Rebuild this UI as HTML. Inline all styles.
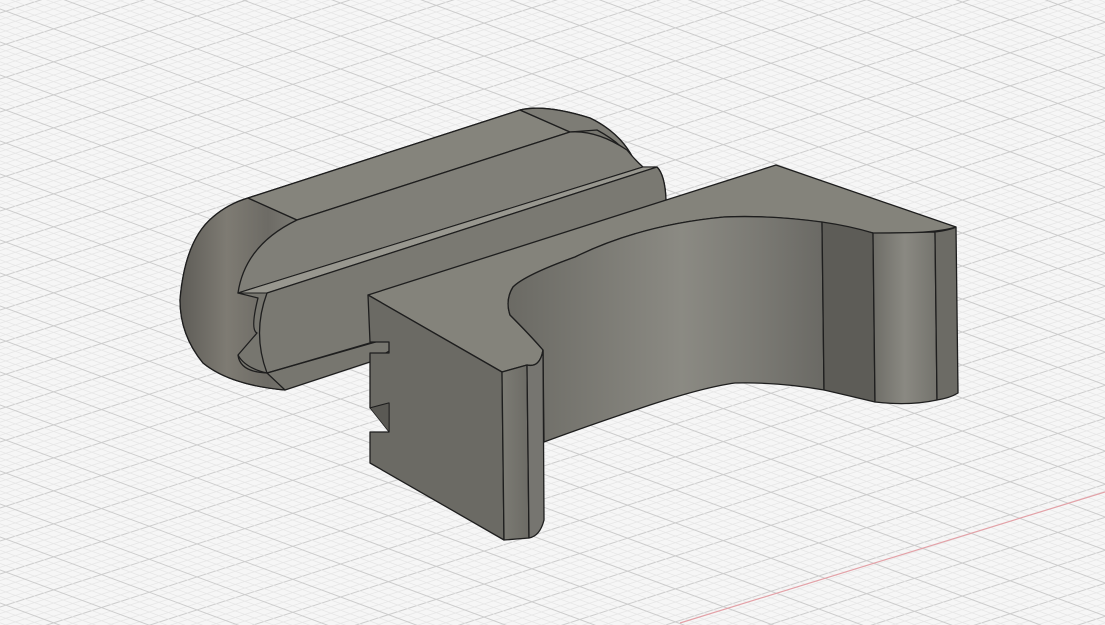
<!DOCTYPE html>
<html><head><meta charset="utf-8"><style>
html,body{margin:0;padding:0;background:#f6f6f6;width:1105px;height:625px;overflow:hidden}
svg{display:block}
</style></head><body>
<svg id="s" width="1105" height="625" viewBox="0 0 1105 625" xmlns="http://www.w3.org/2000/svg" style="overflow:hidden">
<defs>
<linearGradient id="cap" x1="0" x2="1" y1="0" y2="0">
<stop offset="0" stop-color="#5e5c57"/><stop offset="0.4" stop-color="#7e7b73"/><stop offset="0.75" stop-color="#6d6b65"/><stop offset="1" stop-color="#7b7a73"/></linearGradient>
<linearGradient id="inner" x1="0" x2="1" y1="0" y2="0">
<stop offset="0" stop-color="#6b6a64"/><stop offset="0.55" stop-color="#8b8a83"/><stop offset="0.8" stop-color="#7a7973"/><stop offset="1" stop-color="#6a6964"/></linearGradient>
<linearGradient id="rr" x1="0" x2="1" y1="0" y2="0">
<stop offset="0" stop-color="#6e6d67"/><stop offset="0.5" stop-color="#8a8982"/><stop offset="1" stop-color="#74736d"/></linearGradient>
<linearGradient id="strip" x1="0" x2="1" y1="0" y2="0">
<stop offset="0" stop-color="#7c7b74"/><stop offset="1" stop-color="#6c6b65"/></linearGradient>
</defs>
<g id="grid"></g>
<line x1="680" y1="623" x2="1105" y2="492" stroke="#e3a2a8" stroke-width="1.2"/>
<g stroke="#1e1e1e" stroke-width="1.3" stroke-linejoin="round">
<!-- back body silhouette -->
<path d="M248,198 L520,110 Q545,104 590,118 Q625,135 637,167 L657,167 Q665,175 666,200 L420,300 L400,345 L370,362 L285,390 Q230,385 203,363 Q180,335 180,300 Q185,240 213,217 Q228,204 248,198 Z" fill="#77766f"/>
<!-- left curved cap -->
<path d="M248,198 L297,220 Q250,245 240,292 L238,293 L258,298 Q250,330 257,333 L238,355 Q240,372 267,373 L285,390 Q230,385 203,363 Q180,335 180,300 Q185,240 213,217 Q228,204 248,198 Z" fill="url(#cap)"/>
<!-- top strip -->
<path d="M248,198 L520,110 L570,132 L297,220 Z" fill="#85847c"/>
<path d="M520,110 Q545,104 590,118 Q625,135 637,167 L635,165 Q625,145 597,130 L570,132 Z" fill="#7d7c75"/>
<!-- upper curved face -->
<path d="M297,220 L570,132 Q597,130 627,150 Q635,160 643,167 L238,293 Q245,245 297,220 Z" fill="#807f78"/>
<!-- groove -->
<path d="M238,293 L643,167 L657,167 L267,293 Z" fill="#98978f" stroke-width="1"/>
<!-- lower face -->
<path d="M267,293 L657,167 Q665,175 666,200 L420,300 L400,335 L267,373 Q252,333 267,293 Z" fill="#7a7972"/>
<path d="M267,373 L380,340" fill="none"/>
<path d="M238,355 Q245,368 267,373" fill="none"/>
<!-- hook top face -->
<path d="M368,295 L776,165 L956,227 Q935,234 873,233 Q840,225 820,222 Q770,215 724,217 Q640,225 575,257 Q525,275 513,287 Q505,300 510,315 Q530,335 543,350 Q540,368 527,365 L502,372 Z" fill="#84837b"/>
<!-- inner curved face -->
<path d="M543,350 Q530,335 510,315 Q505,300 513,287 Q525,275 575,257 Q640,225 724,217 Q770,215 822,222 L824,390 Q780,382 735,383 Q705,387 650,405 Q590,425 544,442 Z" fill="url(#inner)"/>
<path d="M822,222 Q850,226 873,233 L875,402 Q850,396 824,390 Z" fill="#5d5c57"/>
<path d="M873,233 Q905,233 935,232 L937,400 Q910,406 875,402 Z" fill="url(#rr)"/>
<path d="M935,232 Q950,230 956,227 L958,393 Q950,398 937,400 Z" fill="#6c6b65"/>
<!-- front face -->
<path d="M368,295 L502,372 L504,540 L370,463 L370,432 L389,432 L389,403 L370,408 L370,353 L389,353 L389,342 L370,342 Z" fill="#6b6a64"/>
<path d="M370,408 L389,403 L389,432 Z" fill="#5a5954" stroke-width="0.8"/>
<!-- front strips -->
<path d="M502,372 L527,365 L529,538 L504,540 Z" fill="url(#strip)"/>
<path d="M527,365 Q540,368 543,350 L544,520 Q540,536 529,538 Z" fill="#767570"/>
</g>
</svg>
<script>
(function(){
var g=document.getElementById('grid'),h='';
function fam(slope,sp,off){
 for(var i=-60;i<260;i++){
  var c=off+i*sp/5;
  var major=(i%5===0);
  h+='<line x1="0" y1="'+c+'" x2="1105" y2="'+(c+slope*1105)+'" stroke="'+(major?'#cdcdcd':'#e7e7e7')+'" stroke-width="'+(major?1:0.8)+'"/>';
 }
}
fam(-0.32,33,-20);
fam(0.37,33,-420);
g.innerHTML=h;
})();
</script>
</body></html>
